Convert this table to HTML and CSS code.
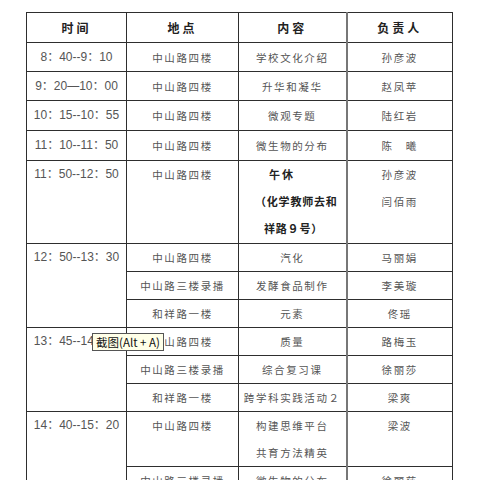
FILE: index.html
```html
<!DOCTYPE html>
<html lang="zh">
<head>
<meta charset="utf-8">
<link rel="stylesheet" href="styles.css">
</head>
<body>
<div class="wrap">
<table class="sched">
  <colgroup>
    <col class="c1"><col class="c2"><col class="c3"><col class="c4">
  </colgroup>
  <tr class="head">
    <th>时间</th><th>地点</th><th>内容</th><th class="who">负责人</th>
  </tr>
  <tr class="r29">
    <td class="time">8：40--9：10</td><td class="cn">中山路四楼</td><td class="cn">学校文化介绍</td><td class="cn who">孙彦波</td>
  </tr>
  <tr class="r29">
    <td class="time">9：20—10：00</td><td class="cn">中山路四楼</td><td class="cn">升华和凝华</td><td class="cn who">赵凤苹</td>
  </tr>
  <tr class="r30">
    <td class="time">10：15--10：55</td><td class="cn">中山路四楼</td><td class="cn">微观专题</td><td class="cn who">陆红岩</td>
  </tr>
  <tr class="r30">
    <td class="time">11：10--11：50</td><td class="cn">中山路四楼</td><td class="cn">微生物的分布</td><td class="cn who">陈　曦</td>
  </tr>
  <tr class="r83 top">
    <td class="time">11：50--12：50</td>
    <td class="cn">中山路四楼</td>
    <td class="cn lunch"><span class="l1">午休</span><span class="l2">（化学教师去和</span><span class="l3">祥路９号）</span></td>
    <td class="cn who">孙彦波<br>闫佰雨</td>
  </tr>
  <tr class="r27">
    <td class="time top" rowspan="3">12：50--13：30</td><td class="cn">中山路四楼</td><td class="cn">汽化</td><td class="cn who">马丽娟</td>
  </tr>
  <tr class="r27">
    <td class="cn">中山路三楼录播</td><td class="cn">发酵食品制作</td><td class="cn who">李美璇</td>
  </tr>
  <tr class="r28">
    <td class="cn">和祥路一楼</td><td class="cn">元素</td><td class="cn who">佟瑶</td>
  </tr>
  <tr class="r28">
    <td class="time top" rowspan="3">13：45--14：25</td><td class="cn">中山路四楼</td><td class="cn">质量</td><td class="cn who">路梅玉</td>
  </tr>
  <tr class="r27">
    <td class="cn">中山路三楼录播</td><td class="cn">综合复习课</td><td class="cn who">徐丽莎</td>
  </tr>
  <tr class="r27">
    <td class="cn">和祥路一楼</td><td class="cn">跨学科实践活动２</td><td class="cn who">梁爽</td>
  </tr>
  <tr class="r56 top">
    <td class="time" rowspan="2">14：40--15：20</td><td class="cn">中山路四楼</td><td class="cn">构建思维平台<br>共育方法精英</td><td class="cn who">梁波</td>
  </tr>
  <tr class="r56 top">
    <td class="cn">中山路三楼录播</td><td class="cn">微生物的分布</td><td class="cn who">徐丽莎</td>
  </tr>
</table>
<div class="tip">截图(Alt + A)</div>
</div>
</body>
</html>
```
FILE: styles.css
```css
html, body {
  margin: 0;
  padding: 0;
  background: #ffffff;
  overflow: hidden;
}
body {
  padding: 12px 0 0 26px;
}
.wrap {
  position: relative;
}
.sched {
  border-collapse: collapse;
  table-layout: fixed;
  width: 427px;
  color: #555;
}
.c1 { width: 100px; }
.c2 { width: 112px; }
.c3 { width: 108px; }
.c4 { width: 106px; }
.sched th, .sched td {
  border: 1px solid #2e2e2e;
  padding: 0;
  text-align: center;
  vertical-align: middle;
  line-height: 27px;
  overflow: hidden;
  white-space: nowrap;
}
.sched th.who, .sched td.who {
  border-left: 2px solid #777;
}
.sched th {
  font-family: "Noto Sans CJK SC", sans-serif;
  font-weight: 700;
  font-size: 12px;
  letter-spacing: 3px;
  color: #222;
}
.head { height: 30px; }
.r29 { height: 29px; }
.r30 { height: 30px; }
.r27 { height: 27px; }
.r28 { height: 28px; }
.r83 { height: 83px; }
.r56 { height: 55px; }
.top td, td.top { vertical-align: top; }
.time {
  font-family: "Liberation Sans", "Noto Sans CJK SC", sans-serif;
  font-size: 12px;
  color: #555;
}
.cn {
  font-family: "Noto Sans CJK SC", sans-serif;
  font-size: 10.5px;
  letter-spacing: 1.6px;
  color: #555;
}
.lunch {
  text-align: left !important;
  font-weight: 700;
  color: #222 !important;
  font-size: 11px !important;
  letter-spacing: 0.8px !important;
}
.lunch span { display: block; }
.l1 { padding-left: 30px; letter-spacing: 2px; }
.l2 { padding-left: 16px; }
.l3 { padding-left: 25px; }
.tip {
  position: absolute;
  left: 66px;
  top: 321px;
  padding: 1px 3px;
  background: #ffffe8;
  border: 1px solid #555;
  font-family: "Noto Sans CJK SC", sans-serif;
  font-size: 11.5px;
  line-height: 14px;
  color: #111;
  white-space: nowrap;
}
```
